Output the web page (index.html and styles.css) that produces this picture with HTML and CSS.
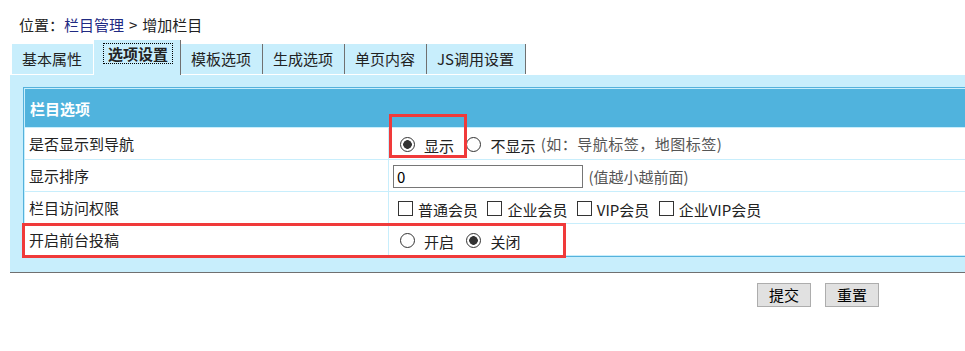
FILE: index.html
```html
<!DOCTYPE html>
<html lang="zh-CN">
<head>
<meta charset="utf-8">
<title>增加栏目</title>
<link rel="stylesheet" href="styles.css">
</head>
<body>
<div class="page">
  <div class="crumb">位置：<a class="crumb-link" href="#">栏目管理</a><span class="sep">&gt;</span>增加栏目</div>
  <div class="tabs">
    <div class="tab">基本属性</div>
    <div class="tab tab-active"><span class="tab-focus">选项设置</span></div>
    <div class="tab">模板选项</div>
    <div class="tab">生成选项</div>
    <div class="tab">单页内容</div>
    <div class="tab">JS调用设置</div>
  </div>
  <div class="panel">
    <table class="form">
      <tr><th colspan="2" class="head">栏目选项</th></tr>
      <tr>
        <td class="label">是否显示到导航</td>
        <td class="field">
          <label class="opt"><input type="radio" name="nav" class="radio" checked><span>显示</span></label>
          <label class="opt"><input type="radio" name="nav" class="radio"><span>不显示</span></label>
          <span class="hint">(如：导航标签，地图标签)</span>
        </td>
      </tr>
      <tr>
        <td class="label">显示排序</td>
        <td class="field">
          <input type="text" class="text" value="0">
          <span class="hint hint-sort">(值越小越前面)</span>
        </td>
      </tr>
      <tr>
        <td class="label">栏目访问权限</td>
        <td class="field">
          <label class="chk"><input type="checkbox" class="box"><span>普通会员</span></label>
          <label class="chk"><input type="checkbox" class="box"><span>企业会员</span></label>
          <label class="chk"><input type="checkbox" class="box"><span>VIP会员</span></label>
          <label class="chk"><input type="checkbox" class="box"><span>企业VIP会员</span></label>
        </td>
      </tr>
      <tr>
        <td class="label">开启前台投稿</td>
        <td class="field">
          <label class="opt"><input type="radio" name="post" class="radio"><span>开启</span></label>
          <label class="opt"><input type="radio" name="post" class="radio" checked><span>关闭</span></label>
        </td>
      </tr>
    </table>
  </div>
  <div class="actions">
    <button type="button" class="btn">提交</button>
    <button type="button" class="btn">重置</button>
  </div>
  <div class="mark mark-nav"></div>
  <div class="mark mark-post"></div>
</div>
</body>
</html>
```

FILE: styles.css
```css
html, body {
  margin: 0;
  padding: 0;
  background: #fff;
  overflow: hidden;
}

body {
  font-family: "Noto Sans CJK SC", "Noto Sans", sans-serif;
  font-size: 15px;
  color: #222;
}

.page {
  position: relative;
  width: 1200px;
  height: 351px;
}

.crumb {
  padding: 15px 0 5px 19px;
  line-height: 20px;
  height: 20px;
}

.crumb-link {
  color: #1f2a82;
  text-decoration: none;
}

.sep {
  margin: 0 5px;
}

.tabs {
  display: flex;
  align-items: flex-end;
  height: 34px;
  padding-left: 12px;
  border-bottom: 1px solid #fff;
}

.tab {
  height: 30px;
  line-height: 30px;
  padding: 0 11px 0 10px;
  background: #c8eefc;
  border-right: 1px solid #707070;
  white-space: nowrap;
}

.tab-active {
  position: relative;
  z-index: 1;
  height: 32px;
  line-height: 19px;
  padding: 3px 7px 0 9px;
  margin-left: -1px;
  margin-bottom: -1px;
  border-left: 1px solid #fff;
  font-weight: bold;
}

.tab-focus {
  display: inline-block;
  padding: 0 4px;
  border: 1px dotted #000;
}

.panel {
  margin-left: 10px;
  padding: 12px 0 15px 13px;
  background: #c8eefc;
  border-bottom: 1px solid #707070;
}

.form {
  width: 1150px;
  border: 1px solid #55b2dc;
  border-spacing: 1px;
  background: #c8eefc;
}

.head {
  height: 38px;
  padding: 0 0 0 5px;
  background: #50b3dd;
  color: #fff;
  font-weight: bold;
  text-align: left;
}

.form td {
  height: 31px;
  padding: 0 0 0 4px;
  background: #fff;
  box-sizing: border-box;
}

.form td.label {
  width: 363px;
  color: #222;
}

.field {
  white-space: nowrap;
}

.opt, .chk {
  display: inline-flex;
  align-items: center;
  vertical-align: middle;
}

.radio {
  appearance: none;
  -webkit-appearance: none;
  width: 15px;
  height: 15px;
  margin: 0 9px 0 7px;
  border: 1px solid #333;
  border-radius: 50%;
  background: #fff;
  box-sizing: border-box;
}

.radio:checked {
  background: radial-gradient(circle, #333 0 4px, #fff 4.6px);
}

.opt span {
  margin-right: 2px;
  padding-top: 2px;
}

.box {
  appearance: none;
  -webkit-appearance: none;
  width: 15px;
  height: 15px;
  margin: 0 5px 0 5px;
  border: 1px solid #333;
  background: #fff;
  box-sizing: border-box;
}

.chk {
  margin-right: 1px;
}

.chk span {
  padding-top: 2px;
}

.hint {
  color: #555;
  vertical-align: middle;
  letter-spacing: 0.5px;
}

.text {
  width: 190px;
  height: 23px;
  margin: 0;
  padding: 0 3px;
  border: 1px solid #767676;
  box-sizing: border-box;
  font-family: inherit;
  font-size: 15px;
  color: #000;
  vertical-align: middle;
}

.hint-sort {
  margin-left: 2px;
  letter-spacing: 0;
}

.actions {
  display: flex;
  gap: 14px;
  padding: 10px 0 0 757px;
}

.btn {
  width: 54px;
  height: 24px;
  padding: 0;
  background: #e1e1e1;
  border: 1px solid #adadad;
  border-radius: 0;
  font-family: inherit;
  font-size: 15px;
  color: #000;
  line-height: 20px;
}

.mark {
  position: absolute;
  border: 3px solid #f03a3a;
  box-sizing: border-box;
}

.mark-nav {
  left: 389px;
  top: 114px;
  width: 78px;
  height: 44px;
}

.mark-post {
  left: 22px;
  top: 223px;
  width: 544px;
  height: 35px;
}
```
